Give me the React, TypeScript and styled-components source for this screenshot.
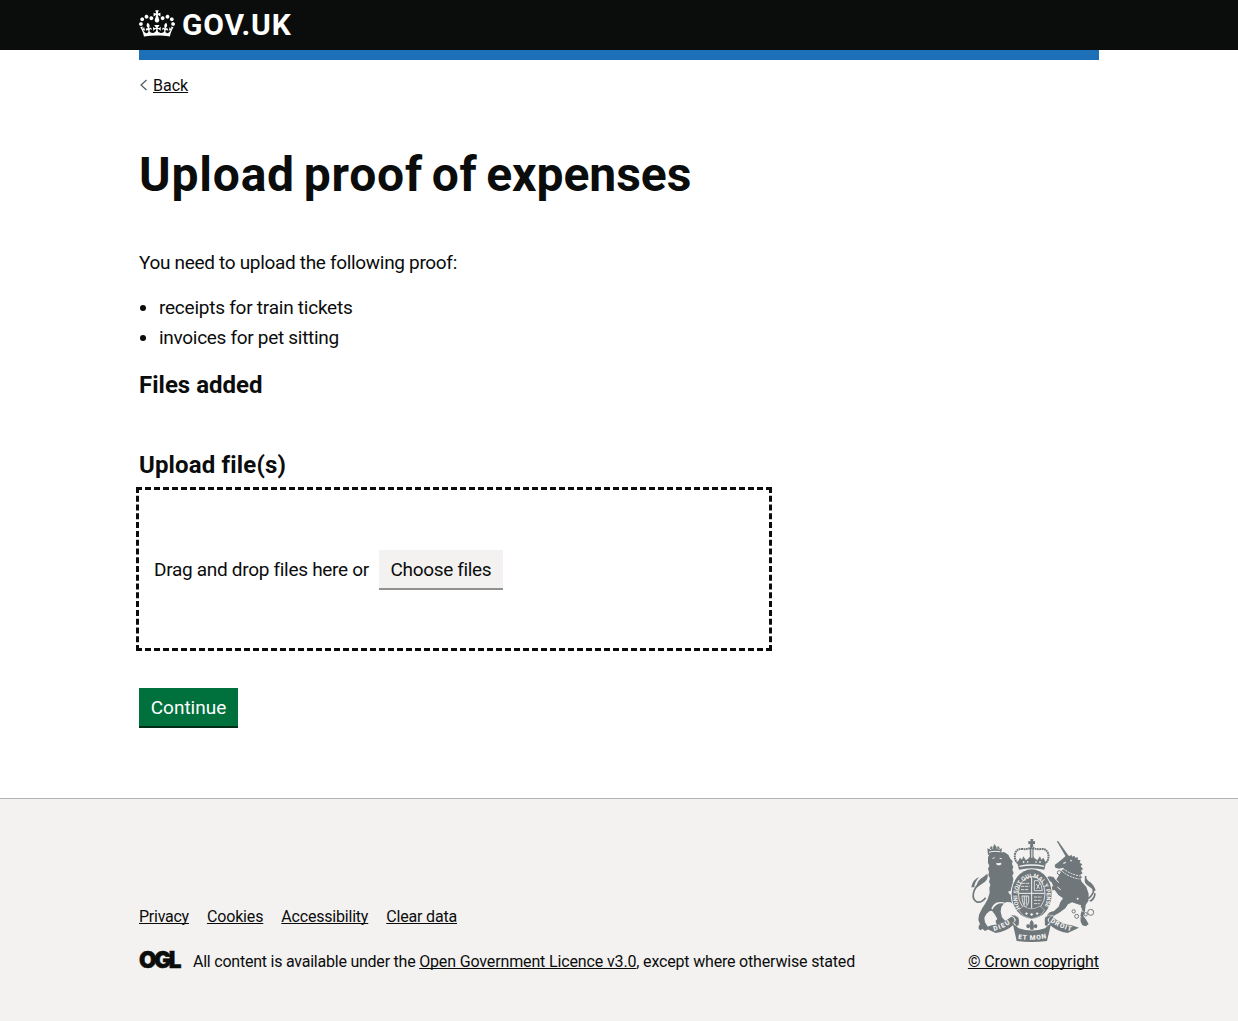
import React from "react";
import styled, { createGlobalStyle } from "styled-components";

const ink = "#0b0c0c";
const crestGrey = "#6f777b";
const paper = "#f3f2f1";

const GlobalStyle = createGlobalStyle`
  *, *::before, *::after { box-sizing: border-box; }
  body {
    margin: 0;
    background: #fff;
    color: ${ink};
    font-family: Roboto, "Liberation Sans", Arial, sans-serif;
    -webkit-font-smoothing: antialiased;
  }
`;

const Page = styled.div`
  min-height: 1021px;
  display: flex;
  flex-direction: column;
`;

const Container = styled.div`
  width: 960px;
  margin: 0 auto;
`;

const Header = styled.header`
  height: 50px;
  background: ${ink};
`;

const HeaderInner = styled(Container)`
  height: 50px;
  display: flex;
  align-items: center;
`;

const Logo = styled.a`
  display: flex;
  align-items: center;
  gap: 7px;
  color: #fff;
  text-decoration: none;
`;

const CrownIcon = styled.svg`
  display: block;
  width: 36px;
  height: 27px;
  margin-top: -3px;
`;

const LogoText = styled.span`
  font-size: 30px;
  line-height: 30px;
  font-weight: 700;
  letter-spacing: 0.8px;
`;

const BlueBar = styled(Container)`
  height: 10px;
  background: #1d70b8;
`;

const Body = styled(Container)`
  flex: 1;
  display: flex;
  flex-direction: column;
  align-items: flex-start;
`;

const Tracked = styled.span<{ $spacing: number; $word?: number }>`
  letter-spacing: ${(p) => p.$spacing}px;
  word-spacing: ${(p) => p.$word ?? 0}px;
`;

const TextLink = styled.a<{ $spacing?: number }>`
  color: ${ink};
  letter-spacing: ${(p) => p.$spacing ?? 0}px;
  text-decoration: underline;
  text-decoration-thickness: 1px;
  text-underline-offset: 1px;
  text-decoration-skip-ink: none;
`;

const BackRow = styled.div`
  display: flex;
  align-items: center;
  gap: 5px;
  margin-top: 16px;
  height: 20px;
  font-size: 16px;
  line-height: 20px;
`;

const Chevron = styled.svg`
  display: block;
  width: 9px;
  height: 12px;
  margin-top: -2px;
`;

const Title = styled.h1`
  margin: 54px 0 50px;
  font-size: 48px;
  line-height: 50px;
  font-weight: 700;
`;

const Paragraph = styled.p`
  margin: 0 0 20px;
  font-size: 19px;
  line-height: 25px;
  letter-spacing: -0.32px;
`;

const BulletList = styled.ul`
  margin: 0 0 20px;
  padding-left: 20px;
  display: grid;
  gap: 5px;
  font-size: 19px;
  line-height: 25px;
`;

const Subheading = styled.h2<{ $gap: number; $spacing?: number }>`
  margin: 0 0 ${(p) => p.$gap}px;
  font-size: 24px;
  line-height: 30px;
  font-weight: 700;
  letter-spacing: ${(p) => p.$spacing ?? 0}px;
`;

const Dropzone = styled.div`
  width: 630px;
  height: 158px;
  padding-left: 15px;
  display: flex;
  align-items: center;
  gap: 10px;
  outline: 3px dashed ${ink};
  font-size: 19px;
  line-height: 25px;
`;

const Button = styled.button<{ $primary?: boolean; $width: number; $spacing?: number }>`
  width: ${(p) => p.$width}px;
  height: 38px;
  padding: 0;
  border: 0;
  background: ${(p) => (p.$primary ? "#00703c" : paper)};
  color: ${(p) => (p.$primary ? "#fff" : ink)};
  box-shadow: 0 2px 0 ${(p) => (p.$primary ? "#002d18" : "#929191")};
  font-family: inherit;
  font-size: 19px;
  line-height: 19px;
  letter-spacing: ${(p) => p.$spacing ?? 0}px;
  white-space: nowrap;
`;

const Submit = styled.div`
  margin-top: 40px;
`;

const Footer = styled.footer`
  height: 223px;
  border-top: 1px solid #b1b4b6;
  background: ${paper};
  font-size: 16px;
  line-height: 20px;
`;

const FooterInner = styled(Container)`
  height: 173px;
  display: flex;
  justify-content: space-between;
  align-items: flex-end;
`;

const FooterLinks = styled.nav`
  display: flex;
  gap: 18px;
  margin-bottom: 25px;
`;

const Licence = styled.div`
  display: flex;
  align-items: center;
`;

const OglMark = styled.span`
  width: 41px;
  margin: -4px 13px 0 0;
  font-family: Inter, Roboto, sans-serif;
  font-size: 22.500px;
  line-height: 20px;
  font-weight: 900;
  letter-spacing: -2.300px;
  -webkit-text-stroke: 0.5px ${ink};
  white-space: nowrap;
`;

const Copyright = styled.div`
  display: flex;
  flex-direction: column;
  align-items: flex-end;
`;

const CrestImage = styled.svg`
  display: block;
  width: 126px;
  height: 104px;
  margin: 0 3px 10px 0;
`;

const Crown = () => (
  <CrownIcon viewBox="0 0 132 97" fill="currentColor" aria-hidden="true">
    <path d="M25 30.2c3.5 1.5 7.7-.2 9.1-3.7 1.5-3.6-.2-7.8-3.9-9.2-3.6-1.4-7.6.3-9.1 3.9-1.4 3.5.3 7.5 3.9 9zM9 39.5c3.6 1.5 7.8-.2 9.2-3.7 1.5-3.6-.2-7.8-3.9-9.1-3.6-1.5-7.6.2-9.1 3.8-1.4 3.5.3 7.5 3.8 9zM4.4 57.2c3.5 1.5 7.7-.2 9.1-3.8 1.5-3.6-.2-7.7-3.9-9.1-3.5-1.5-7.6.3-9.1 3.8-1.4 3.5.3 7.6 3.9 9.1zm38.3-21.4c3.5 1.5 7.7-.2 9.1-3.8 1.5-3.6-.2-7.7-3.9-9.1-3.6-1.5-7.6.3-9.1 3.8-1.3 3.6.4 7.7 3.9 9.1zm64.4-5.6c-3.6 1.5-7.8-.2-9.1-3.7-1.5-3.6.2-7.8 3.8-9.2 3.6-1.4 7.7.3 9.2 3.9 1.3 3.5-.4 7.5-3.9 9zm15.9 9.3c-3.6 1.5-7.7-.2-9.1-3.7-1.5-3.6.2-7.8 3.7-9.1 3.6-1.5 7.7.2 9.2 3.8 1.5 3.5-.3 7.5-3.8 9zm4.7 17.7c-3.6 1.5-7.8-.2-9.2-3.8-1.5-3.6.2-7.7 3.9-9.1 3.6-1.5 7.7.3 9.2 3.8 1.3 3.5-.4 7.6-3.9 9.1zM89.3 35.8c-3.6 1.5-7.8-.2-9.2-3.8-1.4-3.6.2-7.7 3.9-9.1 3.6-1.5 7.7.3 9.2 3.8 1.4 3.6-.3 7.7-3.9 9.1zM69.7 17.7l8.9 4.7V9.3l-8.9 2.8c-.2-.3-.5-.6-.9-.9L72.4 0H59.6l3.5 11.2c-.3.3-.6.5-.9.9l-8.8-2.8v13.1l8.8-4.7c.3.3.6.7.9.9l-5 15.4v.1c-.2.8-.4 1.6-.4 2.4 0 4.1 3.1 7.5 7 8.1h.2c.3 0 .7.1 1 .1.4 0 .7 0 1-.1h.2c4-.6 7.1-4.1 7.1-8.1 0-.8-.1-1.7-.4-2.4V34l-5.1-15.4c.4-.2.7-.6 1-.9zM66 92.8c16.9 0 32.8 1.1 47.1 3.2 4-16.9 8.9-26.7 14-33.5l-9.6-3.4c1 4.9 1.1 7.2 0 10.2-1.5-1.4-3-4.3-4.2-8.7L108.6 76c2.8-2 5-3.2 7.5-3.3-4.4 9.4-10 11.9-13.6 11.2-4.3-.8-6.3-4.6-5.6-7.9 1-4.7 5.7-5.9 8-.5 4.3-8.7-3-11.4-7.6-8.8 7.1-7.2 7.9-13.5 2.1-21.1-8 6.1-8.1 12.3-4.5 20.8-4.7-5.4-12.1-2.5-9.5 6.2 3.4-5.2 7.9-2 7.2 3.1-.6 4.3-6.4 7.8-13.5 7.2-10.3-.9-10.9-8-11.2-13.8 2.5-.5 7.1 1.8 11 7.3L80.2 60c-4.1 4.4-8 5.3-12.3 5.4 1.4-4.4 8-11.6 8-11.6H55.5s6.4 7.2 7.9 11.6c-4.2-.1-8-1-12.3-5.4l1.4 16.4c3.9-5.5 8.5-7.7 10.9-7.3-.3 5.8-.9 12.8-11.1 13.8-7.2.6-12.9-2.9-13.5-7.2-.7-5 3.8-8.3 7.1-3.1 2.7-8.7-4.6-11.6-9.4-6.2 3.7-8.5 3.6-14.7-4.6-20.8-5.8 7.6-5 13.9 2.2 21.1-4.7-2.6-11.9.1-7.7 8.8 2.3-5.5 7.1-4.2 8.1.5.7 3.3-1.3 7.1-5.7 7.9-3.5.7-9-1.8-13.5-11.2 2.5.1 4.7 1.3 7.5 3.3l-4.7-15.4c-1.2 4.4-2.7 7.2-4.3 8.7-1.1-3-.9-5.3 0-10.2l-9.5 3.4c5 6.9 9.9 16.7 14 33.5 14.8-2.1 30.8-3.2 47.7-3.2z" />
  </CrownIcon>
);

const Crest = () => (
  <CrestImage viewBox="30 24 378 312" fill={crestGrey} aria-hidden="true">
    <defs>
      <path id="garter" d="M182 235A44 56 0 1 1 250 235" />
      <path id="mottoLeft" d="M102 303Q130 297 160 275" />
      <path id="mottoMid" d="M174 326Q216 334 263 324" />
      <path id="mottoRight" d="M270 275Q298 296 342 305" />
    </defs>

    {/* lion */}
    <path d="M84 82l6-12 16-4 14 2 12-2 13 8 6 12 7 8-2 8 4 9-3 8 4 10-4 8 3 10-2 10 8 6 6 12-5 10-8-4-3-9-4 10-8 3 5 8 12 4 9 9-1 14-8 4-9-7-12-1-8 4-8 11-2 14 4 17 12 13-2 9-9 3-7-7-5 5-7-5-1-8 5-5-7-13-9-12-8 2-9 8-6 11 2 14 9 15-1 7-8 4-7-6-7 4-5-5 0-8 4-5-5-13 2-16 10-20 8-12 8-14 6-20-1-14 3-10-4-9 3-10-5-9 2-10-3-10 4-9-4-8z" />
    <path d="M84 75l-2-20 7 3 3-9 7 2 5-9 5 9 7-2 4 8 6-2-3 19q-20-6-39 1z" />
    <path d="M77 203q-12 16-26 13-14-6-11-25 3-19 21-32 18-12 16-21" fill="none" stroke={crestGrey} strokeWidth="5" />
    <path d="M82 131q5 14-8 25-12 8-25 18 1-18 12-27 10-7 21-16zM34 172q4-24 24-31-14 14-15 31z" />
    <g fill={paper}>
      <path d="M87 65q17-5 34-1v3q-17-4-34 1z" />
      <circle cx="92" cy="58" r="2" />
      <circle cx="98" cy="54" r="2" />
      <circle cx="111" cy="54" r="2" />
      <circle cx="117" cy="58" r="2" />
      <path d="M97 84l8-2-1 3-7 1zM119 83l7 2-2 3-5-2zM109 98l5 2 8-2 3 4-5 4-7 0-4-3z" />
      <path d="M108 218q12-4 24-1l3 4q-14-3-25 3-8 5-13 15l-3-4q5-12 14-17z" />
    </g>

    {/* unicorn */}
    <path d="M290 33l5 1 29 41-6 6z" />
    <path d="M321 74l8 4 6-4 1 6 8-3 1 6 9-1-1 7 9 2-3 7 8 5-5 6 7 8-6 5 5 8-7 4 5 8-6 5-48-24-3-10-12 3-11-3-2-8 11-8 12-10z" />
    <path d="M308 118l50 20 7 17 14 16 7 20-1 22-8 12-2 18-5 15 9 12 7 13-9 6-10-3-5-11-1-17 5-22-8-12-22-7-12 6-8 12-16 12-18 10-8 9-11-1-2-9 8-9 13-4 14-13 5-14 8-11-14-10-11-15-12 2-5 9-8-3-1-10 8-7 14-2-6-14-14-2-7 7-10-1-5-8 8-8 12 1 9-5 14 2 7 9z" />
    <path d="M366 208q22 2 32-17 7-20-7-31-17-10-14-22" fill="none" stroke={crestGrey} strokeWidth="5" />
    <path d="M379 137q-6 10 8 20 15 8 20 24l-4 3q-12-13-22-19-13-10-2-28zM387 212q14-6 16-24l4 2q0 18-14 25z" />
    <g fill="none" stroke={paper} strokeWidth="3">
      <path d="M309 115q20 18 53 23M307 124q20 18 51 23" strokeDasharray="6 3" />
      <path d="M284 144l12 14M292 171l10 8M362 240l8 5M357 257l7 5" />
    </g>
    <g fill={paper}>
      <circle cx="333" cy="92" r="2.4" />
      <circle cx="353" cy="206" r="3" />
      <circle cx="360" cy="227" r="3" />
      <path d="M309 99l8-4 1 3-7 4z" />
    </g>
    <g fill="none" stroke={crestGrey} strokeWidth="3">
      <circle cx="392" cy="247" r="9" />
      <circle cx="377" cy="253" r="5" />
      <circle cx="341" cy="244" r="5" />
      <circle cx="350" cy="259" r="6" />
      <circle cx="298" cy="128" r="6" />
    </g>

    {/* shield and garter */}
    <ellipse cx="215" cy="192" rx="63" ry="76" fill={paper} />
    <ellipse cx="215" cy="192" rx="60" ry="74" />
    <ellipse cx="215" cy="191" rx="40" ry="52" fill="none" stroke={paper} strokeWidth="2.500" />
    <text fill={paper} fontFamily="Roboto, sans-serif" fontSize="18" fontWeight="700">
      <textPath href="#garter" textLength="226" lengthAdjust="spacingAndGlyphs">HONI SOIT QUI MAL Y PENSE</textPath>
    </text>
    <path d="M215 140v96M176 190h78" stroke={paper} strokeWidth="3" />
    <g fill="none" stroke={paper} strokeWidth="2.500">
      <path d="M186 160h22M183 169h25M183 179h23" strokeDasharray="10 2" />
      <path d="M223 152v30h24q-1-18-12-30zM229 162l10 14M239 160l-9 17" />
      <path d="M186 198h20v18q-3 12-10 15-9-9-10-33zM193 198v26M199 198v26" />
      <path d="M222 201h24M222 211h23M222 221h17" strokeDasharray="9 2" />
    </g>

    {/* royal crown */}
    <path d="M211 27h9l-1 7 6-1v10l-6-1 1 9h-10l1-9-6 1V33l7 1z" />
    <path d="M174 100q-12-10-9-28 5-17 22-15 16 2 28-5 12 7 28 5 17-2 22 15 3 18-9 28" fill="none" stroke={crestGrey} strokeWidth="6" strokeDasharray="5.500 1.500" />
    <path d="M209 54h12l-1 42h-10z" />
    <path d="M172 98l8-15 6 6 4-10 8 12 8-6 9-12 9 12 8 6 8-12 4 10 6-6 8 15-5 21q-38-9-76 0z" />
    <g fill={paper}>
      <path d="M178 107q37-8 75 0l-1 4q-36-8-73 0z" />
      <path d="M191 92l3 4-3 4-3-4zM240 92l3 4-3 4-3-4zM214 58h3v26h-3z" />
      <path d="M203 93l3 3-3 3-3-3zM228 93l3 3-3 3-3-3z" />
    </g>

    {/* ribbon */}
    <path d="M73 293l22-7q30-3 59-26 10 2 10 14l-5 12q-20 19-52 23z" />
    <path d="M357 293l-22-7q-30-3-59-26-10 2-10 14l5 12q20 19 52 23z" />
    <path d="M150 256q14-4 24 5 9 10 3 24l-9 5q-1-10-10-12 10-2 8-10-3-8-16-12zM280 256q-14-4-24 5-9 10-3 24l9 5q1-10 10-12-10-2-8-10 3-8 16-12z" stroke={paper} strokeWidth="1.500" />
    <path d="M158 280l18 15q40 13 79 0l18-15-4 19-8 34q-46 6-91 0z" />
    <path d="M177 264q-1 16 1 28 38 12 75 0 3-12 1-28l-18 2h-41z" fill={paper} />
    <path d="M176 240l14-12q25 17 50 0l14 12-14 18-25 9-25-9z" stroke={paper} strokeWidth="1.500" />
    <path d="M199 247l5 3-4 5-5-4zM215 249l5 4-5 5-5-5zM232 247l4 4-5 4-4-5z" fill={paper} />
    <path d="M215 270q10 10 4 18 3-7 10-5 6 4 1 11l-6 1-2-5-2 9h-9l-2-9-2 5-6-1q-5-7 1-11 7-2 9 5-6-8 4-18z" />
    <g fill={paper} fontFamily="Roboto, sans-serif" fontSize="20" fontWeight="900">
      <text><textPath href="#mottoLeft" textLength="54">DIEU</textPath></text>
      <text><textPath href="#mottoMid" textLength="86">ET MON</textPath></text>
      <text><textPath href="#mottoRight" textLength="70">DROIT</textPath></text>
    </g>
  </CrestImage>
);

export default function App() {
  return (
    <Page>
      <GlobalStyle />
      <Header>
        <HeaderInner>
          <Logo>
            <Crown />
            <LogoText>GOV.UK</LogoText>
          </Logo>
        </HeaderInner>
      </Header>
      <BlueBar />
      <Body as="main">
        <BackRow>
          <Chevron viewBox="0 0 9 12" fill="none" stroke="#505a5f" strokeWidth="1.2">
            <path d="M7.5 1 2 6l5.500 5" />
          </Chevron>
          <TextLink>Back</TextLink>
        </BackRow>
        <Title>
          <Tracked $spacing={0.8} $word={-4}>Upload proof of </Tracked>
          <Tracked $spacing={-0.05}>expenses</Tracked>
        </Title>
        <Paragraph>You need to upload the following proof:</Paragraph>
        <BulletList>
          <li><Tracked $spacing={-0.24}>receipts for train tickets</Tracked></li>
          <li><Tracked $spacing={-0.3}>invoices for pet sitting</Tracked></li>
        </BulletList>
        <Subheading $gap={50}>Files added</Subheading>
        <Subheading $gap={10} $spacing={0.15}>Upload file(s)</Subheading>
        <Dropzone>
          <Tracked $spacing={-0.3}>Drag and drop files here or</Tracked>
          <Button $width={124} $spacing={-0.33}>Choose files</Button>
        </Dropzone>
        <Submit>
          <Button $primary $width={99}>Continue</Button>
        </Submit>
      </Body>
      <Footer>
        <FooterInner>
          <div>
            <FooterLinks>
              <TextLink $spacing={-0.25}>Privacy</TextLink>
              <TextLink $spacing={-0.15}>Cookies</TextLink>
              <TextLink $spacing={-0.2}>Accessibility</TextLink>
              <TextLink $spacing={-0.18}>Clear data</TextLink>
            </FooterLinks>
            <Licence>
              <OglMark>OGL</OglMark>
              <span>
                <Tracked $spacing={-0.23}>All content is available under the </Tracked>
                <TextLink $spacing={-0.14}>Open Government Licence v3.0</TextLink>
                <Tracked $spacing={-0.18}>, except where otherwise stated</Tracked>
              </span>
            </Licence>
          </div>
          <Copyright>
            <Crest />
            <TextLink $spacing={-0.08}>© Crown copyright</TextLink>
          </Copyright>
        </FooterInner>
      </Footer>
    </Page>
  );
}
